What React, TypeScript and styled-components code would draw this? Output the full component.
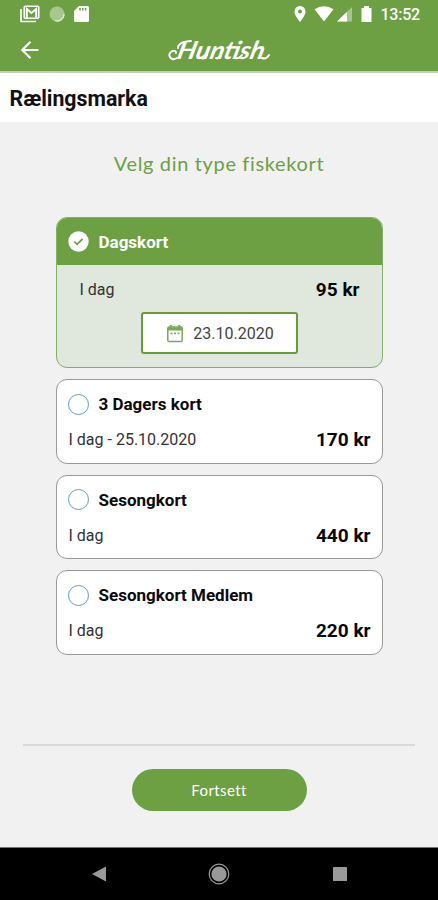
import React, { useState } from 'react';
import styled, { createGlobalStyle } from 'styled-components';

const green = '#6ca043';

const GlobalStyle = createGlobalStyle`
  *, *::before, *::after { box-sizing: border-box; }
  body { margin: 0; background: #f1f1f1; font-family: Roboto, sans-serif; color: #111; }
  button { font: inherit; border: 0; padding: 0; background: none; color: inherit; text-align: left; }
  svg { display: block; flex: none; }
`;

const Screen = styled.div`
  width: 438px;
  height: 900px;
  display: flex;
  flex-direction: column;
  overflow: hidden;
  background: #f1f1f1;
`;

const Header = styled.header`
  height: 73px;
  flex: none;
  background: ${green};
  border-bottom: 2px solid #c3cdbb;
  color: #fff;
`;

const StatusBar = styled.div`
  height: 28px;
  padding: 0 18px 0 20px;
  display: flex;
  align-items: center;
  justify-content: space-between;
`;

const Notifications = styled.div`
  display: flex;
  align-items: center;
  gap: 9px;
`;

const SystemIcons = styled.div`
  display: flex;
  align-items: center;
`;

const Clock = styled.span`
  margin-left: 7px;
  padding-top: 1px;
  font-size: 16px;
  font-weight: 500;
  line-height: 28px;
  letter-spacing: -0.2px;
`;

const AppBar = styled.div`
  height: 43px;
  display: grid;
  grid-template-columns: 1fr 110px 1fr;
  align-items: center;
  padding: 0 20px;
`;

const BackButton = styled.button`
  width: 20px;
  height: 20px;
`;

const PlaceTitle = styled.h1`
  margin: 0;
  height: 48.5px;
  flex: none;
  padding: 1px 9.5px 0;
  background: #fff;
  font-size: 21.3px;
  line-height: 49px;
  font-weight: 700;
`;

const Content = styled.main`
  flex: 1;
  display: flex;
  flex-direction: column;
  align-items: center;
`;

const Heading = styled.h2`
  margin: 27px 0 0;
  height: 28px;
  color: ${green};
  font: 400 20px/28px Lato, sans-serif;
  letter-spacing: 0.65px;
  white-space: nowrap;
`;

const CardList = styled.div`
  width: 327px;
  margin-top: 40px;
  display: flex;
  flex-direction: column;
  gap: 11px;
`;

const Card = styled.section<{ $selected: boolean }>`
  height: ${p => (p.$selected ? 151.5 : 84.5)}px;
  border: 1px solid ${p => (p.$selected ? '#83b063' : '#999')};
  border-radius: 11px;
  overflow: hidden;
  background: ${p => (p.$selected ? '#e0e7dc' : '#fff')};
`;

const CardHeader = styled.button<{ $selected: boolean }>`
  width: 100%;
  height: 47px;
  padding: 1px 11px 0;
  display: flex;
  align-items: center;
  gap: 10px;
  font-size: 17px;
  font-weight: 700;
  background: ${p => (p.$selected ? green : 'transparent')};
  color: ${p => (p.$selected ? '#fff' : '#0b0b0b')};
`;

const Radio = styled.span`
  width: 21px;
  height: 21px;
  border: 1.5px solid #5e9dcb;
  border-radius: 50%;
`;

const PriceRow = styled.div<{ $selected: boolean }>`
  display: flex;
  align-items: center;
  justify-content: space-between;
  height: 25px;
  margin-top: ${p => (p.$selected ? 12 : 0)}px;
  padding: 0 ${p => (p.$selected ? '22px 0 23px' : '11px 0 12px')};
`;

const Period = styled.span`
  font-size: 16px;
  color: #333;
`;

const Price = styled.span`
  font-size: 19px;
  font-weight: 700;
  color: #080808;
`;

const DateButton = styled.button`
  width: 157px;
  height: 42px;
  margin: 10px auto 0;
  padding: 1px 0 0 2px;
  display: flex;
  align-items: center;
  justify-content: center;
  gap: 9px;
  background: #fff;
  border: 2px solid #679d37;
  border-radius: 3px;
  font-size: 16px;
  color: #444;
`;

const Footer = styled.footer`
  width: 392px;
  height: 103px;
  margin-top: auto;
  border-top: 2px solid #d9d9d9;
  display: flex;
  justify-content: center;
  align-items: flex-start;
  padding-top: 23px;
`;

const ContinueButton = styled.button`
  width: 175px;
  height: 42px;
  border-radius: 21px;
  background: ${green};
  color: #fff;
  font: 400 15px/42px Lato, sans-serif;
  letter-spacing: 0.4px;
  text-align: center;
`;

const SystemNav = styled.nav`
  height: 53px;
  flex: none;
  background: #000;
  border-top: 1px solid #777;
  display: grid;
  grid-template-columns: repeat(3, 120.5px);
  justify-content: center;
  justify-items: center;
  align-items: center;
`;

const MailStackIcon = () => (
  <svg width="20" height="18" viewBox="0 0 20 18" fill="none" stroke="#fff">
    <path d="M1 4v12.5h15" strokeWidth="1.7" />
    <rect x="4.2" y="1.2" width="14.6" height="12" rx="1" strokeWidth="1.5" />
    <path d="M6.8 12.5V4l4.7 4 4.7-4v8.5" strokeWidth="2" />
  </svg>
);

const SyncIcon = () => (
  <svg width="16" height="16" viewBox="0 0 16 16">
    <circle cx="8" cy="8" r="7.5" fill="#a8c78f" />
    <path d="M15 8a7 7 0 0 1-9 6.7" fill="none" stroke="#dce9d3" strokeWidth="1.3" />
  </svg>
);

const SdCardIcon = () => (
  <svg width="15" height="16" viewBox="0 0 15 16">
    <path d="M5 0h8.5Q15 0 15 1.5v13q0 1.5-1.5 1.5h-12Q0 16 0 14.5V5Z" fill="#fff" />
    <path d="M6 2v2.6M8.8 2v2.6M11.6 2v2.6" stroke={green} strokeWidth="1.5" />
  </svg>
);

const StatusIcons = () => (
  <svg width="79" height="18" viewBox="0 0 79 18" fill="#fff">
    <path fillRule="evenodd" d="M6 1a5.5 5.5 0 0 0-5.5 5.5C.5 10.7 6 17 6 17s5.5-6.3 5.5-10.5A5.5 5.5 0 0 0 6 1Zm0 3.6a2 2 0 1 1 0 4 2 2 0 0 1 0-4Z" />
    <path d="M20.5 4.3q9.500-6 19 0L30 16.500Z" />
    <path d="M43 16.500 58 2v14.500Z" opacity=".4" />
    <path d="M43 16.500 53 6.800v9.700Z" />
    <path d="M70 1h5v2h2.500v14h-10V3H70Z" />
  </svg>
);

const BackArrowIcon = () => (
  <svg width="20" height="20" viewBox="0 0 20 20" fill="none" stroke="#fff" strokeWidth="2.2">
    <path d="M18.5 10H3M10.500 1.800 2.300 10l8.200 8.200" />
  </svg>
);

const Wordmark = () => (
  <svg width="110" height="36" viewBox="0 0 110 36" fill="#fff">
    <g transform="translate(12 27) skewX(-14)">
      <text x="0" y="0" textLength="87" lengthAdjust="spacingAndGlyphs" fontFamily="Lato, sans-serif" fontSize="25" fontStyle="italic" fontWeight="700">Huntish</text>
    </g>
    <path d="M13 26c-5 3-9-1-7-5 2-3 6-3 6 0M14 16c0-5 7-7 13-7M37 26q3 2 6-3M52 26q3 1 5-3M71 26q4 1 7-3M98 26q4 2 7-3" fill="none" stroke="#fff" strokeWidth="2" strokeLinecap="round" />
  </svg>
);

const CheckIcon = () => (
  <svg width="21" height="21" viewBox="0 0 21 21">
    <circle cx="10.5" cy="10.5" r="10.2" fill="#fff" />
    <path d="m6.3 10.7 2.8 2.7 5.5-5.6" fill="none" stroke={green} strokeWidth="1.7" />
  </svg>
);

const CalendarIcon = () => (
  <svg width="18" height="19" viewBox="0 0 18 19" fill="none" stroke="#79a957">
    <rect x="1.8" y="3" width="14.4" height="14.5" rx="1.3" strokeWidth="1.5" />
    <path d="M2 4.8h14" strokeWidth="3.2" />
    <path d="M4.8 1v3M13.2 1v3" strokeWidth="2" />
    <path d="M4.5 9.5h2M8 9.5h2M11.5 9.5h2" strokeWidth="1.7" />
  </svg>
);

const NavBackIcon = () => (
  <svg width="16" height="16" viewBox="0 0 16 16"><path d="M1 8 15 .5v15Z" fill="#999" /></svg>
);
const NavHomeIcon = () => (
  <svg width="22" height="22" viewBox="0 0 22 22">
    <circle cx="11" cy="11" r="9.8" fill="none" stroke="#999" strokeWidth="1.2" />
    <circle cx="11" cy="11" r="7.6" fill="#999" />
  </svg>
);
const NavRecentIcon = () => (
  <svg width="14" height="14" viewBox="0 0 14 14"><rect width="14" height="14" rx=".5" fill="#999" /></svg>
);

const cards = [
  { name: 'Dagskort', period: 'I dag', price: '95 kr' },
  { name: '3 Dagers kort', period: 'I dag - 25.10.2020', price: '170 kr' },
  { name: 'Sesongkort', period: 'I dag', price: '440 kr' },
  { name: 'Sesongkort Medlem', period: 'I dag', price: '220 kr' },
];

export default function App() {
  const [selected, setSelected] = useState(0);
  return (
    <Screen>
      <GlobalStyle />
      <Header>
        <StatusBar>
          <Notifications><MailStackIcon /><SyncIcon /><SdCardIcon /></Notifications>
          <SystemIcons><StatusIcons /><Clock>13:52</Clock></SystemIcons>
        </StatusBar>
        <AppBar>
          <BackButton aria-label="Tilbake"><BackArrowIcon /></BackButton>
          <Wordmark />
        </AppBar>
      </Header>
      <PlaceTitle>Rælingsmarka</PlaceTitle>
      <Content>
        <Heading>Velg din type fiskekort</Heading>
        <CardList>
          {cards.map((card, i) => {
            const active = i === selected;
            return (
              <Card key={card.name} $selected={active}>
                <CardHeader $selected={active} onClick={() => setSelected(i)}>
                  {active ? <CheckIcon /> : <Radio />}
                  {card.name}
                </CardHeader>
                <PriceRow $selected={active}>
                  <Period>{card.period}</Period>
                  <Price>{card.price}</Price>
                </PriceRow>
                {active && <DateButton><CalendarIcon />23.10.2020</DateButton>}
              </Card>
            );
          })}
        </CardList>
        <Footer><ContinueButton>Fortsett</ContinueButton></Footer>
      </Content>
      <SystemNav><NavBackIcon /><NavHomeIcon /><NavRecentIcon /></SystemNav>
    </Screen>
  );
}
